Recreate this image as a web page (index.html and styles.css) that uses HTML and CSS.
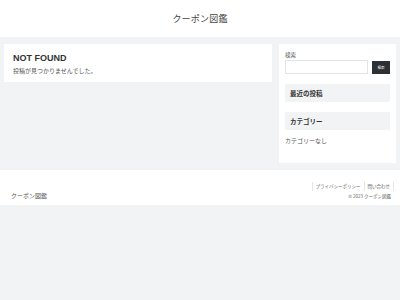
FILE: index.html
```html
<!DOCTYPE html>
<html lang="ja">
<head>
  <meta charset="UTF-8">
  <title>クーポン図鑑</title>
  <link rel="stylesheet" href="styles.css">
</head>
<body>
  <header class="site-header">
    <div class="site-title">クーポン図鑑</div>
  </header>

  <div class="content-wrap">
    <main class="main-card">
      <h1 class="page-title">NOT FOUND</h1>
      <p class="page-text">投稿が見つかりませんでした。</p>
    </main>

    <aside class="sidebar">
      <div class="widget-search">
        <label class="search-label">検索</label>
        <div class="search-row">
          <input type="text" class="search-input">
          <button class="search-btn">検索</button>
        </div>
      </div>
      <h2 class="widget-title">最近の投稿</h2>
      <h2 class="widget-title">カテゴリー</h2>
      <p class="widget-text">カテゴリーなし</p>
    </aside>
  </div>

  <footer class="site-footer">
    <div class="footer-name">クーポン図鑑</div>
    <div class="footer-right">
      <ul class="footer-links">
        <li>プライバシーポリシー</li>
        <li>問い合わせ</li>
      </ul>
      <div class="copyright">© 2023 クーポン図鑑</div>
    </div>
  </footer>
</body>
</html>
```

FILE: styles.css
```css
body{
  margin:0;
  background:#f2f3f5;
  font-family:"Noto Sans CJK JP","Noto Sans",sans-serif;
  color:#333;
  height:300px;
}
.site-header{
  background:white;
  height:37px;
  display:flex;
  align-items:center;
  justify-content:center;
}
.site-title{
  font-size:9px;
  color:#444;
  letter-spacing:0.2px;
}
.content-wrap{
  display:flex;
  align-items:flex-start;
  gap:7px;
  padding:7px 4px;
}
.main-card{
  background:white;
  width:268px;
  height:38px;
  box-sizing:border-box;
  padding:8px 9px;
}
.page-title{
  margin:0;
  font-family:"Liberation Sans",sans-serif;
  font-size:9px;
  font-weight:bold;
  color:#333;
  line-height:12px;
}
.page-text{
  margin:2px 0 0;
  font-size:6px;
  color:#555;
  line-height:10px;
}
.sidebar{
  background:white;
  width:117px;
  height:119px;
  box-sizing:border-box;
  padding:7px 6px;
}
.search-label{
  display:block;
  font-size:5.5px;
  color:#555;
  line-height:8px;
}
.search-row{
  display:flex;
  align-items:center;
  gap:4px;
  margin-top:1px;
}
.search-input{
  width:83px;
  height:14px;
  box-sizing:border-box;
  border:1px solid #e2e4e7;
  padding:0;
  margin:0;
}
.search-btn{
  width:18px;
  height:13px;
  padding:0;
  border:none;
  background:#2d3034;
  color:white;
  font-size:3.5px;
  font-family:"Noto Sans CJK JP",sans-serif;
}
.widget-title{
  margin:10px 0 0;
  background:#f2f3f5;
  height:18px;
  box-sizing:border-box;
  padding:0 5px;
  font-size:6.5px;
  font-weight:bold;
  color:#333;
  line-height:18px;
}
.widget-title + .widget-title{
  margin-top:10px;
}
.widget-text{
  margin:7px 0 0;
  font-size:6px;
  color:#555;
  line-height:8px;
}
.site-footer{
  background:white;
  height:35px;
  display:flex;
  justify-content:space-between;
  align-items:flex-end;
  box-sizing:border-box;
  padding:0 6px 3px 11px;
}
.footer-name{
  font-size:6px;
  color:#555;
  line-height:10px;
  margin-bottom:1px;
}
.footer-right{
  display:flex;
  flex-direction:column;
  align-items:flex-end;
  padding-bottom:2px;
}
.footer-links{
  list-style:none;
  margin:0;
  padding:0;
  display:flex;
}
.footer-links li{
  font-size:4.5px;
  color:#666;
  line-height:9px;
  padding:0 3px;
  border-left:1px solid #e5e5e5;
}
.footer-links li:last-child{
  border-right:1px solid #e5e5e5;
}
.copyright{
  font-size:4.5px;
  color:#666;
  line-height:8px;
  margin-top:1px;
  padding-right:3px;
}
```
